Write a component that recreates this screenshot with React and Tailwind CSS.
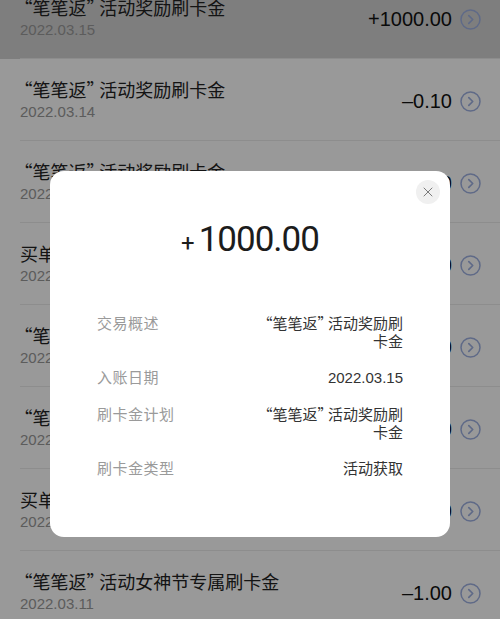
import React from "react";
import { X } from "lucide-react";

const cjk = { fontFamily: '"Noto Sans CJK SC", "Noto Sans", sans-serif' };
const num = { fontFamily: '"Liberation Sans", Arial, sans-serif' };

function Q({ children }) {
  return (
    <>
      <span className="-ml-[0.3em]">“</span>
      {children}
      <span className="-mr-[0.3em]">”</span>
    </>
  );
}

const rows = [
  { t: <><Q>笔笔返</Q>活动奖励刷卡金</>, d: "2022.03.15", a: "+1000.00", hl: true },
  { t: <><Q>笔笔返</Q>活动奖励刷卡金</>, d: "2022.03.14", a: "–0.10" },
  { t: <><Q>笔笔返</Q>活动奖励刷卡金</>, d: "2022.03.14", a: "+10.00" },
  { t: "买单立减刷卡金", d: "2022.03.13", a: "–5.00" },
  { t: <><Q>笔笔返</Q>活动奖励刷卡金</>, d: "2022.03.13", a: "+10.00" },
  { t: <><Q>笔笔返</Q>活动奖励刷卡金</>, d: "2022.03.12", a: "+20.00" },
  { t: "买单立减刷卡金", d: "2022.03.12", a: "–3.00" },
  { t: <><Q>笔笔返</Q>活动女神节专属刷卡金</>, d: "2022.03.11", a: "–1.00" },
];

function Arrow() {
  return (
    <svg width="21" height="21" viewBox="0 0 21 21" className="shrink-0">
      <circle cx="10.5" cy="10.5" r="9.5" fill="none" stroke="#9fb1e2" strokeWidth="1.5" />
      <path d="M8.8 6.6 L12.7 10.5 L8.8 14.4" fill="none" stroke="#9fb1e2" strokeWidth="1.7" strokeLinecap="round" strokeLinejoin="round" />
    </svg>
  );
}

function Detail({ label, children }) {
  return (
    <div className="flex justify-between items-start text-[15px] leading-[18px]" style={cjk}>
      <div className="text-[#9a9a9a] tracking-[0.5px]">{label}</div>
      <div className="text-[#333] text-right">{children}</div>
    </div>
  );
}

export default function App() {
  return (
    <div className="relative w-[500px] h-[619px] overflow-hidden bg-white">
      <div className="-mt-[23px]">
        {rows.map((r, i) => (
          <div key={i} className={"relative h-[82px] flex items-center pl-5 pr-[19px] " + (r.hl ? "bg-[#d2d2d2]" : "bg-white")}>
            <div className="flex-1 flex flex-col">
              <div className="text-[18px] leading-[24px] text-[#222]" style={cjk}>{r.t}</div>
              <div className="text-[15px] leading-[22px] text-[#999]" style={num}>{r.d}</div>
            </div>
            <div className="flex items-center gap-2 pt-[2px]">
              <span className="text-[20px] text-[#111]" style={num}>{r.a}</span>
              <Arrow />
            </div>
            <div className="absolute left-5 right-0 bottom-0 h-px bg-[#ececec]" />
          </div>
        ))}
      </div>

      <div className="absolute inset-0 bg-black/40" />

      <div className="absolute left-[50px] top-[171px] w-[400px] bg-white rounded-[14px] px-[47px] pt-[49px] pb-[60px]">
        <div className="absolute top-[9px] right-[10px] w-6 h-6 rounded-full bg-[#f0f0f0] flex items-center justify-center">
          <X size={16} strokeWidth={1.5} color="#7a7a7a" />
        </div>
        <div className="h-10 flex items-baseline justify-center text-[#1c1c1c]" style={{ fontFamily: 'Roboto, "Liberation Sans", sans-serif' }}>
          <span className="text-[24px] leading-10 mr-[4px]">+</span>
          <span className="text-[35px] leading-10 tracking-[-1px]">1000.00</span>
        </div>
        <div className="mt-[54px] flex flex-col gap-[18px]">
          <Detail label="交易概述"><Q>笔笔返</Q>活动奖励刷<br />卡金</Detail>
          <Detail label="入账日期"><span style={num}>2022.03.15</span></Detail>
          <Detail label="刷卡金计划"><Q>笔笔返</Q>活动奖励刷<br />卡金</Detail>
          <Detail label="刷卡金类型">活动获取</Detail>
        </div>
      </div>
    </div>
  );
}
